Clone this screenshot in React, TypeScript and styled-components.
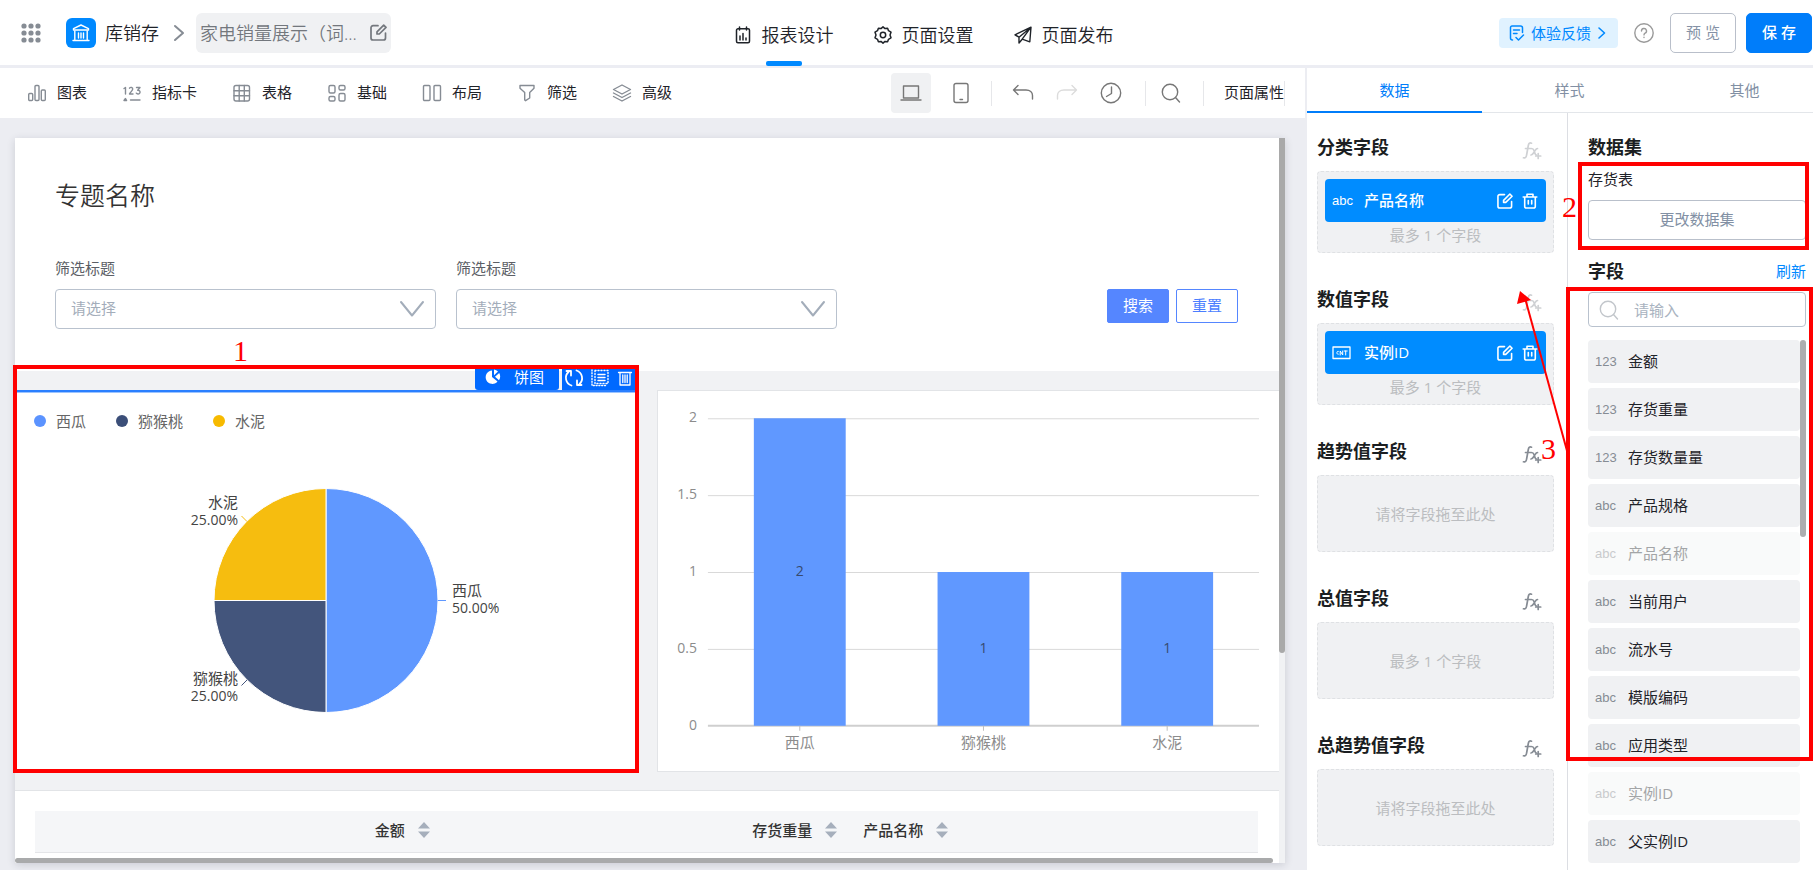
import React from 'react';
import styled, { createGlobalStyle } from 'styled-components';

const GlobalStyle = createGlobalStyle`
  *, *::before, *::after { box-sizing: border-box; }
  body {
    margin: 0;
    font-family: "Open Sans", "Noto Sans CJK SC", sans-serif;
    font-size: 15px;
    line-height: 20px;
    color: #1f2329;
    background: #ecedf2;
  }
  button, input, select { font: inherit; color: inherit; }
  button { padding: 0; border: 0; background: none; cursor: pointer; }
  svg { display: block; flex: none; }
  h1, h2, p, ul { margin: 0; padding: 0; }
`;

/* ---------- icons ---------- */

type IconProps = { size?: number; width?: number; height?: number; box?: string; stroke?: number; children: React.ReactNode };

const Icon = ({ size = 20, width, height, box = '0 0 20 20', stroke = 1.4, children }: IconProps) => (
  <svg
    width={width ?? size}
    height={height ?? size}
    viewBox={box}
    fill="none"
    stroke="currentColor"
    strokeWidth={stroke}
    strokeLinecap="round"
    strokeLinejoin="round"
    aria-hidden="true"
  >
    {children}
  </svg>
);

const DotsIcon = () => (
  <Icon size={20}>
    {[3, 10, 17].map((y) => [3, 10, 17].map((x) => <circle key={`${x}-${y}`} cx={x} cy={y} r="2.6" fill="currentColor" stroke="none" />))}
  </Icon>
);

const BankIcon = () => (
  <Icon size={18} box="0 0 18 18">
    <path d="M9 1 16.5 4.6V6H1.500V4.600Z" />
    <path d="M2.800 7v8.500M15.200 7v8.500M1 16.500h16M6.500 9v5M9 9v5M11.500 9v5" />
  </Icon>
);

const EditIcon = ({ size = 17 }: { size?: number }) => (
  <Icon size={size} box="0 0 17 17" stroke={1.7}>
    <path d="M8 1.700H3a2 2 0 0 0-2 2V14a2 2 0 0 0 2 2h10.500a2 2 0 0 0 2-2V9" />
    <path d="M7 10V7.800L13.700 1.100 16 3.400 9.300 10Z" />
  </Icon>
);

const TrashIcon = () => (
  <Icon size={16} box="0 0 16 16" stroke={1.6}>
    <path d="M1.200 4h13.600M5 4V1.300h6V4M2.700 4v9.500a1.500 1.500 0 0 0 1.500 1.500h7.600a1.500 1.500 0 0 0 1.500-1.500V4M6.300 7.500v3.500M9.700 7.500v3.500" />
  </Icon>
);

const ReportIcon = () => (
  <Icon size={18} box="0 0 18 18" stroke={1.5}>
    <rect x="2.500" y="2.800" width="13" height="14" rx="1.500" />
    <path d="M5.500 1v3M12.500 1v3M6 10v4M9 7.500V14M12 12v2" />
  </Icon>
);

const GearIcon = () => (
  <Icon size={18} box="0 0 18 18" stroke={1.5}>
    <path d="M9 .9 11 2.600 13.600 2.300 14.500 4.700 17 6.200 16 9 17 11.800 14.500 13.300 13.600 15.700 11 15.400 9 17.100 7 15.400 4.400 15.700 3.500 13.300 1 11.800 2 9 1 6.200 3.500 4.700 4.400 2.300 7 2.600Z" />
    <circle cx="9" cy="9" r="2.700" />
  </Icon>
);

const PlaneIcon = () => (
  <Icon size={18} box="0 0 18 18" stroke={1.4}>
    <path d="M17 1.200 1 8.800 5 11.200V17L8.200 13.200 15.800 15.800ZM17 1.200 5 11.200M17 1.200 8.200 13.200" />
  </Icon>
);

const FeedbackIcon = () => (
  <Icon size={16} box="0 0 16 16" stroke={1.5}>
    <path d="M13.500 7.500V3a2 2 0 0 0-2-2H3a1.500 1.500 0 0 0-1.500 1.500V13A2 2 0 0 0 3.500 15M4.500 5h6M4.500 8.500h3.500M7 12.500 9.500 15 14.500 10" />
  </Icon>
);

const HelpIcon = () => (
  <Icon size={20}>
    <circle cx="10" cy="10" r="9.200" />
    <path d="M7.500 8a2.500 2.500 0 1 1 3.600 2.200c-.8.400-1.100.9-1.100 1.700M10 14.300v.2" />
  </Icon>
);

const ChartIcon = () => (
  <Icon size={20}>
    <rect x="1.700" y="10.500" width="4" height="7" rx="1" />
    <rect x="8" y="2.500" width="4" height="15" rx="1" />
    <rect x="14.300" y="7" width="4" height="10.500" rx="1" />
  </Icon>
);

const CardIcon = () => (
  <Icon size={20}>
    <path d="M2 5.500 3.500 4.500V11M7.500 5.200C8.500 3.800 11 4.300 10.700 6.200 10.500 7.800 8 9.500 7.500 11H11M14.500 4.500H18L15.700 7.200C18.700 7 18.800 11 16 11 15.200 11 14.700 10.800 14.300 10.200" />
    <path d="M3.500 15.500 2 17.500H4.600ZM8.500 17h9.500" />
  </Icon>
);

const TableIcon = () => (
  <Icon size={20}>
    <rect x="2" y="2.500" width="15.500" height="15.500" rx="2" />
    <path d="M7.200 2.500V18M12.300 2.500V18M2 7.700h15.500M2 12.800h15.500" />
  </Icon>
);

const BasicIcon = () => (
  <Icon size={20}>
    <rect x="2" y="2.500" width="6" height="7.500" rx="1.500" />
    <rect x="12" y="2.500" width="6" height="4.500" rx="1.500" />
    <rect x="2" y="13.500" width="6" height="4.500" rx="1.500" />
    <rect x="12" y="10.500" width="6" height="7.500" rx="1.500" />
  </Icon>
);

const LayoutIcon = () => (
  <Icon size={20}>
    <rect x="1.500" y="2.500" width="6.500" height="15" rx="1" />
    <rect x="12" y="2.500" width="6.500" height="15" rx="1" />
  </Icon>
);

const FilterIcon = () => (
  <Icon size={20}>
    <path d="M3 2.500h14v2.700L12.700 9.500V15L8.600 17.700 7.700 17V9.500L3 5.200Z" />
  </Icon>
);

const LayersIcon = () => (
  <Icon size={20}>
    <path d="M10 2 18.500 6.500 10 11 1.500 6.500ZM1.500 10 10 14.500 18.500 10M1.500 13.500 10 18 18.500 13.500" />
  </Icon>
);

const LaptopIcon = () => (
  <Icon width={22} height={20} box="0 0 22 20">
    <path d="M3.500 3h15v12h-15ZM1 17h20" />
  </Icon>
);

const PhoneIcon = () => (
  <Icon width={18} height={22} box="0 0 18 22">
    <rect x="2" y="1.500" width="14" height="19" rx="2" />
    <path d="M8 17.500h2.500" />
  </Icon>
);

const UndoIcon = () => (
  <Icon width={22} height={20} box="0 0 22 20">
    <path d="M6 2.500 1.500 7 6 11.500M1.500 7H14c4 0 6.500 2.500 6.500 5.500V16" />
  </Icon>
);

const RedoIcon = () => (
  <Icon width={22} height={20} box="0 0 22 20">
    <path d="M16 2.500 20.500 7 16 11.500M20.500 7H8C4 7 1.500 9.500 1.500 12.500V16" />
  </Icon>
);

const ClockIcon = () => (
  <Icon size={22} box="0 0 22 22">
    <circle cx="11" cy="11" r="9.700" />
    <path d="M11.500 5v6.500L6.500 14.500" />
  </Icon>
);

const SearchIcon = () => (
  <Icon size={20}>
    <circle cx="9" cy="9" r="7.700" />
    <path d="M14.500 14.500 18.500 19" />
  </Icon>
);

const FxIcon = () => (
  <Icon width={20} height={20} stroke={1.700}>
    <path d="M9.500 2.200C7.800 1.500 6.700 2.300 6.300 4.500L4.600 14C4.300 16.300 3.300 17.300 1.500 16.800M3.500 7.500h5" />
    <path d="M9.500 7.500c1.500 0 2 .5 2.500 2l1 3c.3 1 .8 1.500 1.500 1.500M15.500 7.500C14 7.500 13.500 9 12.500 10.500S10.500 14 9 14" />
    <path d="M16.200 12.500v5M13.700 15h5" />
  </Icon>
);

const CountIcon = () => (
  <Icon width={20} height={14} box="0 0 20 14" stroke={1.300}>
    <rect x="1" y="1" width="17" height="11.500" />
    <path d="M6.300 5.300C4.300 4.500 4.300 9 6.300 8.300M8.200 9V5L10.700 9V5M12.200 5h3M13.700 5v4" strokeWidth="1" />
  </Icon>
);

const PieIcon = () => (
  <Icon size={16} box="0 0 16 16">
    <path d="M7 1.500A6.700 6.700 0 1 0 12.500 12.500L7 8Z" fill="currentColor" stroke="none" />
    <path d="M9 0.500V6.300L13 2.600A7 7 0 0 0 9 .5ZM14.200 4 10 7.800 14 11.200A7 7 0 0 0 14.200 4Z" fill="currentColor" stroke="none" />
  </Icon>
);

const RefreshIcon = () => (
  <Icon size={20} stroke={1.800}>
    <path d="M7.500 17.500A8 8 0 0 1 4.500 4M2.500 3h4.500v4.500M12.500 2.500A8 8 0 0 1 15.500 16M17.500 17H13v-4.500" />
  </Icon>
);

const CopyIcon = () => (
  <Icon size={18} box="0 0 18 18" stroke={1.400}>
    <path d="M4 1.500h13v13H4Z" strokeDasharray="1 2" />
    <path d="M1 1v15.500h14" strokeDasharray="1 1.800" />
    <path d="M7 5.500h7M7 8.500h7M7 11.500h7" />
  </Icon>
);

const BinIcon = () => (
  <Icon size={18} box="0 0 18 18" stroke={1.300}>
    <path d="M2.500 3.500h13M4 3.500V16h10V3.500M6.800 6v7.500M9 6v7.500M11.200 6v7.500" />
  </Icon>
);

/* ---------- shell ---------- */

const Shell = styled.div`
  display: flex;
  flex-direction: column;
  height: 100vh;
  min-height: 600px;
  overflow: hidden;
`;

const Header = styled.header`
  display: grid;
  grid-template-columns: 1fr auto 1fr;
  align-items: stretch;
  flex: none;
  height: 68px;
  padding: 0 1px 0 21px;
  background: #fff;
  border-bottom: 3px solid #ecedf3;
`;

const Crumbs = styled.div`
  display: flex;
  align-items: center;
  font-size: 18px;
  line-height: 24px;
  font-weight: 350;
`;

const AppsButton = styled.button`
  margin-right: 25px;
  color: #868c94;
`;

const AppLogo = styled.span`
  display: grid;
  place-items: center;
  width: 30px;
  height: 30px;
  margin-right: 9px;
  border-radius: 6px;
  color: #fff;
  background: #0089ff;
`;

const CrumbChevron = styled.span`
  margin: 0 11px 0 14px;
  color: #868c94;
`;

const PageName = styled.button`
  display: flex;
  align-items: center;
  justify-content: space-between;
  width: 195px;
  height: 40px;
  padding: 0 4px;
  border-radius: 6px;
  color: #73777d;
  background: #f0f1f3;
  white-space: nowrap;
`;

const Nav = styled.nav`
  display: flex;
  gap: 40px;
  padding-left: 14px;
`;

const NavLink = styled.a<{ $active?: boolean }>`
  position: relative;
  display: flex;
  align-items: center;
  gap: 10px;
  padding-top: 4px;
  font-size: 18px;
  line-height: 24px;
  font-weight: 350;
  color: #1f2329;
  text-decoration: none;

  &::after {
    content: ${(p) => (p.$active ? "''" : 'none')};
    position: absolute;
    left: calc(50% - 18px);
    bottom: -1px;
    width: 36px;
    height: 5px;
    border-radius: 2px;
    background: #0089ff;
  }
`;

const HeaderActions = styled.div`
  display: flex;
  align-items: center;
  justify-content: flex-end;
`;

const Feedback = styled.button`
  display: flex;
  align-items: center;
  gap: 6px;
  height: 30px;
  margin-right: 16px;
  padding: 0 12px 0 10px;
  border-radius: 4px;
  color: #0089ff;
  background: #e0f2ff;
`;

const HelpButton = styled.button`
  margin-right: 16px;
  color: #9a9a9a;
`;

const ActionButton = styled.button<{ $primary?: boolean }>`
  width: 66px;
  height: 40px;
  margin-left: ${(p) => (p.$primary ? '10px' : '0')};
  padding-bottom: 2px;
  border: 1px solid ${(p) => (p.$primary ? '#007dfa' : '#b9bfca')};
  border-radius: 5px;
  color: ${(p) => (p.$primary ? '#fff' : '#8592a6')};
  background: ${(p) => (p.$primary ? '#007dfa' : '#fff')};
  font-weight: ${(p) => (p.$primary ? 500 : 400)};
`;

const Body = styled.div`
  display: flex;
  flex: 1;
  min-height: 0;
`;

const Workspace = styled.main`
  display: flex;
  flex-direction: column;
  flex: 1;
  min-width: 0;
  margin-right: 2px;
`;

/* ---------- toolbar ---------- */

const Toolbar = styled.div`
  display: flex;
  justify-content: space-between;
  flex: none;
  height: 50px;
  padding: 0 20px 0 27px;
  background: #fff;
`;

const ToolGroup = styled.div`
  display: flex;
  gap: 35px;
`;

const Tool = styled.button`
  display: flex;
  align-items: center;
  gap: 10px;
  white-space: nowrap;

  svg { color: #868c94; }
  span { padding-bottom: 3px; }
`;

const ViewGroup = styled.div`
  display: flex;
  align-items: center;
`;

const ViewButton = styled.button<{ $active?: boolean; $muted?: boolean }>`
  display: grid;
  place-items: center;
  width: 40px;
  height: 40px;
  border-radius: 4px;
  color: ${(p) => (p.$muted ? '#dcdcdc' : '#777')};
  background: ${(p) => (p.$active ? '#f0f1f3' : 'transparent')};
`;

const DeviceGroup = styled.div`
  display: flex;
  gap: 10px;
  padding-right: 10px;
`;

const HistoryGroup = styled.div`
  display: flex;
  gap: 4px;
  padding: 0 14px 0 11px;
`;

const SearchGroup = styled.div`
  padding: 0 12px 0 5px;
`;

const Rule = styled.span`
  width: 1px;
  height: 25px;
  background: #e6e7ea;
`;

const PagePropsButton = styled.button`
  padding: 0 0 3px 20px;
`;

/* ---------- sheet ---------- */

const CanvasArea = styled.div`
  display: flex;
  flex: 1;
  min-height: 0;
  padding: 20px 20px 7px 15px;
  background: #ecedf2;
`;

const Sheet = styled.div`
  display: flex;
  flex: 1;
  min-width: 0;
  background: #fff;
  box-shadow: 0 2px 8px rgba(30, 40, 60, 0.16);
`;

const SheetContent = styled.div`
  display: flex;
  flex-direction: column;
  flex: 1;
  min-width: 0;
`;

const VTrack = styled.div`
  width: 6px;
  background: #f1f2f4;
`;

const VThumb = styled.div`
  height: 71%;
  border-radius: 0 0 3px 3px;
  background: #a9a9a9;
`;

const HThumb = styled.div`
  height: 5px;
  margin: auto 6px 0 0;
  border-radius: 3px;
  background: #a9aaab;
`;

const FilterForm = styled.form`
  padding: 42px 41px 42px 40px;
  background: #fff;
`;

const Title = styled.h1`
  margin-bottom: 48px;
  font-size: 25px;
  line-height: 30px;
  font-weight: 350;
  color: #333;
`;

const FilterRow = styled.div`
  display: grid;
  grid-template-columns: repeat(3, 1fr);
  gap: 20px;
`;

const FilterField = styled.label`
  display: block;
  color: #5c5f66;
`;

const SelectBox = styled.span`
  display: flex;
  align-items: center;
  height: 40px;
  margin-top: 11px;
  padding: 0 10px 0 15px;
  border: 1px solid #b9c2ce;
  border-radius: 4px;
  color: #a3adba;

  select {
    flex: 1;
    min-width: 0;
    padding: 0 0 3px;
    border: 0;
    outline: 0;
    appearance: none;
    background: none;
  }
`;

const FilterActions = styled.div`
  display: flex;
  justify-content: flex-end;
  align-items: flex-start;
  gap: 7px;
  padding-top: 31px;
`;

const FormButton = styled.button<{ $primary?: boolean }>`
  width: 62px;
  height: 34px;
  padding-bottom: 2px;
  border: 1px solid #5586ff;
  border-radius: 2px;
  color: ${(p) => (p.$primary ? '#fff' : '#4a7dff')};
  background: ${(p) => (p.$primary ? '#5586ff' : '#fff')};
`;

const ChartZone = styled.section`
  display: grid;
  grid-template-columns: 1fr 1fr;
  gap: 20px;
  padding: 19px 0 18px;
  background: #f1f2f4;
`;

const PieCard = styled.div`
  position: relative;
  height: 382px;
  border-top: 2px solid #2a7fff;
  box-shadow: inset 0 1px #9cc4ff;
  background: #fff;
`;

const CardTags = styled.div`
  position: absolute;
  right: 0;
  bottom: 100%;
  display: flex;
  gap: 3px;
  margin-bottom: 2px;
`;

const CardTag = styled.div<{ $tools?: boolean }>`
  display: flex;
  align-items: center;
  justify-content: ${(p) => (p.$tools ? 'space-between' : 'flex-start')};
  gap: ${(p) => (p.$tools ? '0' : '13px')};
  width: ${(p) => (p.$tools ? '75px' : '84px')};
  height: 25px;
  padding: ${(p) => (p.$tools ? '0 3px 0 2px' : '0 10px 2px')};
  border-radius: ${(p) => (p.$tools ? '0' : '3px')};
  color: #fff;
  background: #0069ff;
`;

const Legend = styled.ul`
  display: flex;
  gap: 30px;
  height: 39px;
  padding: 18px 0 0 19px;
  list-style: none;
  color: #666;
`;

const LegendItem = styled.li<{ $color: string }>`
  display: flex;
  align-items: center;
  gap: 10px;

  &::before {
    content: '';
    width: 12px;
    height: 12px;
    border-radius: 50%;
    background: ${(p) => p.$color};
  }
`;

const ChartSvg = styled.svg`
  width: 100%;
  font-family: "Open Sans", "Noto Sans CJK SC", sans-serif;
  font-size: 15px;
`;

const BarCard = styled.div`
  height: 382px;
  border: 1px solid #e2e4e7;
  border-right: 0;
  background: #fff;
`;

const TableZone = styled.section`
  padding: 20px 21px 0 20px;
  border-top: 1px solid #e2e4e7;
`;

const DataTable = styled.table`
  width: 100%;
  table-layout: fixed;
  border-collapse: collapse;
  background: #f5f6f8;

  th {
    height: 41px;
    padding: 0 13px 2px;
    border-bottom: 1px solid #e4e5e8;
    font-weight: 500;
    color: #333;
  }
`;

const SortButton = styled.button<{ $end?: boolean }>`
  display: flex;
  align-items: center;
  gap: 13px;
  margin-left: ${(p) => (p.$end ? 'auto' : '0')};
`;

/* ---------- annotations ---------- */

const Mark = styled.div<{ $inset: string }>`
  position: absolute;
  inset: ${(p) => p.$inset};
  z-index: 2;
  border: 4px solid #f00;
  pointer-events: none;
`;

const MarkNumber = styled.span`
  position: absolute;
  z-index: 3;
  font-family: "Liberation Serif", serif;
  font-size: 30px;
  line-height: 30px;
  color: #f00;
`;

const FirstNumber = styled(MarkNumber)`
  left: 218px;
  top: -56px;
`;

const SecondNumber = styled(MarkNumber)`
  left: -26px;
  top: 25px;
`;

const ThirdNumber = styled(MarkNumber)`
  left: -47px;
  top: 142px;
`;

const Arrow = styled.svg`
  position: absolute;
  left: -73px;
  top: -4px;
  z-index: 3;
`;

/* ---------- side panel ---------- */

const SidePanel = styled.aside`
  display: flex;
  flex-direction: column;
  flex: none;
  width: 506px;
  background: #fff;
`;

const TabList = styled.div`
  display: grid;
  grid-template-columns: repeat(3, 175px);
  flex: none;
  height: 45px;
  overflow: hidden;
  box-shadow: inset 0 -1px #e3e6ea;
`;

const Tab = styled.button<{ $active?: boolean }>`
  height: 45px;
  border-bottom: 2px solid ${(p) => (p.$active ? '#007dfa' : 'transparent')};
  color: ${(p) => (p.$active ? '#007dfa' : '#8290a4')};
`;

const PanelBody = styled.div`
  display: flex;
  flex: 1;
  min-height: 0;
`;

const SlotColumn = styled.div`
  flex: none;
  width: 261px;
  padding: 10px 13px 0 10px;
  border-right: 1px solid #dcdee3;
`;

const SlotSection = styled.section`
  margin-bottom: 22px;
`;

const SlotHead = styled.div`
  display: flex;
  align-items: center;
  justify-content: space-between;
  height: 48px;
  padding-right: 12px;
`;

const Heading = styled.h2`
  font-size: 18px;
  line-height: 24px;
  font-weight: 700;
  color: #1b1e22;
`;

const FxButton = styled.button<{ $muted: boolean }>`
  padding-top: 8px;
  color: ${(p) => (p.$muted ? '#cfd1d4' : '#868c94')};
`;

const DropBox = styled.div<{ $filled: boolean }>`
  display: flex;
  flex-direction: column;
  align-items: center;
  justify-content: ${(p) => (p.$filled ? 'flex-start' : 'center')};
  gap: 3px;
  height: ${(p) => (p.$filled ? '82px' : '77px')};
  padding: 7px;
  border: 1px dashed #dfe1e4;
  border-radius: 4px;
  color: #bbbdc0;
  background: #f0f1f3;
`;

const Chip = styled.div`
  display: flex;
  align-items: center;
  width: 100%;
  height: 43px;
  padding: 0 8px 0 7px;
  border-radius: 4px;
  color: #fff;
  background: #008cff;
`;

const FieldType = styled.span`
  width: 32px;
  font-family: "Liberation Sans", Arial, sans-serif;
  font-size: 13px;
`;

const ChipLabel = styled.span`
  flex: 1;
  padding-bottom: 2px;
  font-weight: 500;
`;

const ChipActions = styled.span`
  display: flex;
  gap: 9px;
`;

const DataColumn = styled.div`
  flex: 1;
  min-width: 0;
  padding: 22px 7px 0 20px;
`;

const DatasetGroup = styled.section`
  position: relative;
  margin-top: 8px;
  padding-top: 2px;
`;

const ChangeButton = styled.button`
  width: 100%;
  height: 40px;
  margin-top: 11px;
  padding-bottom: 2px;
  border: 1px solid #b9c0cb;
  border-radius: 4px;
  color: #8290a4;
`;

const FieldHead = styled.div`
  display: flex;
  align-items: center;
  justify-content: space-between;
  margin: 19px 0 9px;
`;

const RefreshLink = styled.button`
  color: #0089ff;
`;

const FieldGroup = styled.section`
  position: relative;
`;

const SearchBox = styled.label`
  display: flex;
  align-items: center;
  gap: 15px;
  height: 35px;
  margin-bottom: 13px;
  padding: 0 10px;
  border: 1px solid #b9c2ce;
  border-radius: 4px;
  color: #c2c6cb;

  input {
    flex: 1;
    min-width: 0;
    padding: 0;
    border: 0;
    outline: 0;
    background: none;
  }

  input::placeholder {
    color: #a9b3c0;
    opacity: 1;
  }
`;

const FieldScroll = styled.div`
  display: flex;
`;

const FieldList = styled.ul`
  display: flex;
  flex-direction: column;
  flex: 1;
  gap: 5px;
  list-style: none;
`;

const FieldItem = styled.li<{ $used?: boolean }>`
  display: flex;
  align-items: center;
  gap: 1px;
  height: 43px;
  padding: 0 0 2px 7px;
  border-radius: 4px;
  color: ${(p) => (p.$used ? '#a3a5a7' : '#1f2329')};
  background: ${(p) => (p.$used ? '#f9fafa' : '#f0f1f3')};

  ${FieldType} {
    padding-top: 2px;
    color: ${(p) => (p.$used ? '#c9cbcd' : '#868c94')};
  }
`;

const FieldThumb = styled.div`
  width: 6px;
  height: 197px;
  border-radius: 3px;
  background: #adaeaf;
`;

/* ---------- data ---------- */

const tools = [
  { label: '图表', icon: <ChartIcon /> },
  { label: '指标卡', icon: <CardIcon /> },
  { label: '表格', icon: <TableIcon /> },
  { label: '基础', icon: <BasicIcon /> },
  { label: '布局', icon: <LayoutIcon /> },
  { label: '筛选', icon: <FilterIcon /> },
  { label: '高级', icon: <LayersIcon /> },
];

const slots = [
  { title: '分类字段', hint: '最多 1 个字段', type: 'abc', field: '产品名称' },
  { title: '数值字段', hint: '最多 1 个字段', type: <CountIcon />, field: '实例ID' },
  { title: '趋势值字段', hint: '请将字段拖至此处' },
  { title: '总值字段', hint: '最多 1 个字段' },
  { title: '总趋势值字段', hint: '请将字段拖至此处' },
];

const fields = [
  { type: '123', name: '金额' },
  { type: '123', name: '存货重量' },
  { type: '123', name: '存货数量量' },
  { type: 'abc', name: '产品规格' },
  { type: 'abc', name: '产品名称', used: true },
  { type: 'abc', name: '当前用户' },
  { type: 'abc', name: '流水号' },
  { type: 'abc', name: '模版编码' },
  { type: 'abc', name: '应用类型' },
  { type: 'abc', name: '实例ID', used: true },
  { type: 'abc', name: '父实例ID' },
];

const bars = [
  { name: '西瓜', value: 2 },
  { name: '猕猴桃', value: 1 },
  { name: '水泥', value: 1 },
];

const columns = [
  { name: '金额', end: true },
  { name: '存货重量', end: true },
  { name: '产品名称', end: false },
];

/* ---------- charts ---------- */

const PieChart = () => (
  <ChartSvg height="340" viewBox="0 0 622 340" role="img" aria-label="饼图">
    <g stroke="#fff" strokeWidth="1">
      <path d="M311 169.500V57.500A112 112 0 0 1 311 281.500Z" fill="#6098ff" />
      <path d="M311 169.500V281.500A112 112 0 0 1 199 169.500Z" fill="#43557c" />
      <path d="M311 169.500H199A112 112 0 0 1 311 57.500Z" fill="#f6bd0f" />
    </g>
    <path d="M423 169.500h8" stroke="#6098ff" />
    <path d="M232 90.500 226.500 85" stroke="#f6bd0f" />
    <path d="M232 249 226.500 254.500" stroke="#43557c" />
    <g fill="#444">
      <text x="223" y="77" textAnchor="end">水泥</text>
      <text x="223" y="94" fontSize="14" textAnchor="end">25.00%</text>
      <text x="223" y="253" textAnchor="end">猕猴桃</text>
      <text x="223" y="270" fontSize="14" textAnchor="end">25.00%</text>
      <text x="437" y="165">西瓜</text>
      <text x="437" y="182" fontSize="14">50.00%</text>
    </g>
  </ChartSvg>
);

const BarChart = () => {
  const base = 335;
  const unit = 154;
  return (
    <ChartSvg height="380" viewBox="0 0 622 380" role="img" aria-label="柱状图">
      {[0, 0.5, 1, 1.5, 2].map((v) => {
        const y = base - v * unit;
        return (
          <g key={v}>
            <path d={`M50 ${v ? y + 0.5 : y}H602`} stroke={v ? '#d9d9d9' : '#cfcfcf'} strokeWidth={v ? 1 : 2} />
            <text x="39" y={y + 4} fontSize="14" fill="#8c8c8c" textAnchor="end">{v}</text>
          </g>
        );
      })}
      {bars.map((b, i) => {
        const cx = 142 + i * 184;
        return (
          <g key={b.name} textAnchor="middle">
            <rect x={cx - 46} y={base - b.value * unit} width="92" height={b.value * unit} fill="#6098ff" />
            <text x={cx} y={base - (b.value * unit) / 2 + 4} fontSize="14" fill="#374a6e">{b.value}</text>
            <path d={`M${cx} ${base}v5`} stroke="#bfbfbf" />
            <text x={cx} y="357" fill="#8c8c8c">{b.name}</text>
          </g>
        );
      })}
    </ChartSvg>
  );
};

const FilterSelect = () => (
  <FilterField>
    筛选标题
    <SelectBox>
      <select defaultValue="">
        <option value="">请选择</option>
      </select>
      <Icon width={26} height={18} box="0 0 26 18" stroke={2}>
        <path d="M2 2 13 15.500 24 2" />
      </Icon>
    </SelectBox>
  </FilterField>
);

export default function App() {
  return (
    <Shell>
      <GlobalStyle />
      <Header>
        <Crumbs>
          <AppsButton aria-label="应用"><DotsIcon /></AppsButton>
          <AppLogo><BankIcon /></AppLogo>
          库销存
          <CrumbChevron>
            <Icon width={12} height={18} box="0 0 12 18" stroke={2}><path d="M2 2 10 9 2 16" /></Icon>
          </CrumbChevron>
          <PageName>
            <span>家电销量展示（词...</span>
            <EditIcon />
          </PageName>
        </Crumbs>
        <Nav>
          <NavLink href="#design" $active><ReportIcon />报表设计</NavLink>
          <NavLink href="#settings"><GearIcon />页面设置</NavLink>
          <NavLink href="#publish"><PlaneIcon />页面发布</NavLink>
        </Nav>
        <HeaderActions>
          <Feedback>
            <FeedbackIcon />
            体验反馈
            <Icon width={9} height={14} box="0 0 9 14" stroke={1.6}><path d="M2 2 7.500 7 2 12" /></Icon>
          </Feedback>
          <HelpButton aria-label="帮助"><HelpIcon /></HelpButton>
          <ActionButton>预 览</ActionButton>
          <ActionButton $primary>保 存</ActionButton>
        </HeaderActions>
      </Header>

      <Body>
        <Workspace>
          <Toolbar>
            <ToolGroup>
              {tools.map((t) => (
                <Tool key={t.label}>{t.icon}<span>{t.label}</span></Tool>
              ))}
            </ToolGroup>
            <ViewGroup>
              <DeviceGroup>
                <ViewButton $active aria-label="电脑"><LaptopIcon /></ViewButton>
                <ViewButton aria-label="手机"><PhoneIcon /></ViewButton>
              </DeviceGroup>
              <Rule />
              <HistoryGroup>
                <ViewButton aria-label="撤销"><UndoIcon /></ViewButton>
                <ViewButton $muted aria-label="重做"><RedoIcon /></ViewButton>
                <ViewButton aria-label="历史"><ClockIcon /></ViewButton>
              </HistoryGroup>
              <Rule />
              <SearchGroup>
                <ViewButton aria-label="搜索"><SearchIcon /></ViewButton>
              </SearchGroup>
              <Rule />
              <PagePropsButton>页面属性</PagePropsButton>
              <Rule />
            </ViewGroup>
          </Toolbar>

          <CanvasArea>
            <Sheet>
              <SheetContent>
                <FilterForm onSubmit={(e) => e.preventDefault()}>
                  <Title>专题名称</Title>
                  <FilterRow>
                    <FilterSelect />
                    <FilterSelect />
                    <FilterActions>
                      <FormButton $primary type="submit">搜索</FormButton>
                      <FormButton type="reset">重置</FormButton>
                    </FilterActions>
                  </FilterRow>
                </FilterForm>

                <ChartZone>
                  <PieCard>
                    <CardTags>
                      <CardTag><PieIcon />饼图</CardTag>
                      <CardTag $tools>
                        <button aria-label="刷新"><RefreshIcon /></button>
                        <button aria-label="复制"><CopyIcon /></button>
                        <button aria-label="删除"><BinIcon /></button>
                      </CardTag>
                    </CardTags>
                    <Legend>
                      <LegendItem $color="#5b93ff">西瓜</LegendItem>
                      <LegendItem $color="#3b4e78">猕猴桃</LegendItem>
                      <LegendItem $color="#f7ba00">水泥</LegendItem>
                    </Legend>
                    <PieChart />
                    <Mark $inset="-27px -2px -1px -2px" />
                    <FirstNumber>1</FirstNumber>
                  </PieCard>
                  <BarCard><BarChart /></BarCard>
                </ChartZone>

                <TableZone>
                  <DataTable>
                    <thead>
                      <tr>
                        {columns.map((c) => (
                          <th key={c.name} scope="col">
                            <SortButton $end={c.end}>
                              {c.name}
                              <svg width="12" height="16" viewBox="0 0 12 16" fill="#a6afbc" aria-hidden="true">
                                <path d="M6 0 12 6.500H0ZM6 16 0 9.500H12Z" />
                              </svg>
                            </SortButton>
                          </th>
                        ))}
                      </tr>
                    </thead>
                  </DataTable>
                </TableZone>
                <HThumb />
              </SheetContent>
              <VTrack><VThumb /></VTrack>
            </Sheet>
          </CanvasArea>
        </Workspace>

        <SidePanel>
          <TabList role="tablist">
            <Tab role="tab" aria-selected $active>数据</Tab>
            <Tab role="tab">样式</Tab>
            <Tab role="tab">其他</Tab>
          </TabList>
          <PanelBody>
            <SlotColumn>
              {slots.map((s) => (
                <SlotSection key={s.title}>
                  <SlotHead>
                    <Heading>{s.title}</Heading>
                    <FxButton $muted={!!s.field} aria-label="公式"><FxIcon /></FxButton>
                  </SlotHead>
                  <DropBox $filled={!!s.field}>
                    {s.field && (
                      <Chip>
                        <FieldType>{s.type}</FieldType>
                        <ChipLabel>{s.field}</ChipLabel>
                        <ChipActions>
                          <button aria-label="编辑"><EditIcon size={16} /></button>
                          <button aria-label="删除"><TrashIcon /></button>
                        </ChipActions>
                      </Chip>
                    )}
                    <p>{s.hint}</p>
                  </DropBox>
                </SlotSection>
              ))}
            </SlotColumn>
            <DataColumn>
              <Heading>数据集</Heading>
              <DatasetGroup>
                <p>存货表</p>
                <ChangeButton>更改数据集</ChangeButton>
                <Mark $inset="-5px -3px -10px -10px" />
                <SecondNumber>2</SecondNumber>
              </DatasetGroup>
              <FieldHead>
                <Heading>字段</Heading>
                <RefreshLink>刷新</RefreshLink>
              </FieldHead>
              <FieldGroup>
                <SearchBox>
                  <SearchIcon />
                  <input placeholder="请输入" aria-label="搜索字段" />
                </SearchBox>
                <FieldScroll>
                  <FieldList>
                    {fields.map((f) => (
                      <FieldItem key={f.name} $used={f.used}>
                        <FieldType>{f.type}</FieldType>
                        {f.name}
                      </FieldItem>
                    ))}
                  </FieldList>
                  <FieldThumb />
                </FieldScroll>
                <Mark $inset="-5px -7px 102px -22px" />
                <Arrow width="60" height="175" viewBox="0 0 60 175" aria-hidden="true">
                  <path d="M10 10 54 170" stroke="#f00" strokeWidth="2" />
                  <path d="M5 3 2 16 16 12Z" fill="#f00" />
                </Arrow>
                <ThirdNumber>3</ThirdNumber>
              </FieldGroup>
            </DataColumn>
          </PanelBody>
        </SidePanel>
      </Body>
    </Shell>
  );
}
